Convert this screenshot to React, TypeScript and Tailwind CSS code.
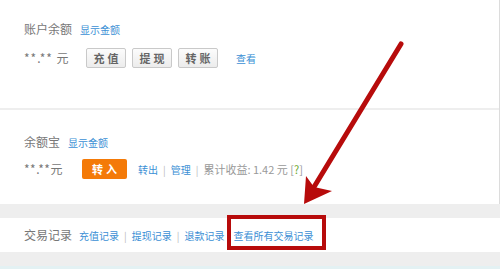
import React from "react";

const font = { fontFamily: '"Noto Sans CJK SC", "Noto Sans", sans-serif' };

function GrayBtn({ children }: { children: React.ReactNode }) {
  return (
    <div className="flex h-[20px] w-[40px] items-center justify-center rounded-[2px] border border-[#c9c9c9] bg-gradient-to-b from-[#fcfcfc] to-[#ececec] pl-[3px] text-[11px] font-bold tracking-[3px] text-[#666]">
      {children}
    </div>
  );
}

function Sep() {
  return <span className="mx-[5px] text-[10px] text-[#bbb]">|</span>;
}

export default function App() {
  return (
    <div className="relative h-[269px] w-[500px] overflow-hidden bg-white" style={font}>
      {/* top card */}
      <div className="h-[204px] border-r border-[#dcdcdc] bg-white">
        <div className="h-[108px] pl-[24px] pt-[21px]">
          <div className="flex h-[16px] items-center">
            <span className="text-[12px] text-[#777]">账户余额</span>
            <span className="ml-[8px] text-[10px] text-[#3b8fd5]">显示金额</span>
          </div>
          <div className="mt-[11px] flex h-[20px] items-center">
            <span className="w-[62px] text-[12px] tracking-[1px] text-[#777]">**.** 元</span>
            <div className="flex gap-[6px]">
              <GrayBtn>充值</GrayBtn>
              <GrayBtn>提现</GrayBtn>
              <GrayBtn>转账</GrayBtn>
            </div>
            <span className="ml-[18px] text-[10px] text-[#3b8fd5]">查看</span>
          </div>
        </div>
        <div className="h-[2px] bg-[#eeeeee]" />
        <div className="pl-[24px] pt-[24px]">
          <div className="flex h-[16px] items-center">
            <span className="text-[12px] text-[#777]">余额宝</span>
            <span className="ml-[8px] text-[10px] text-[#3b8fd5]">显示金额</span>
          </div>
          <div className="mt-[9px] flex h-[20px] items-center">
            <span className="w-[58px] text-[12px] tracking-[0.5px] text-[#777]">**.**元</span>
            <div className="flex h-[20px] w-[45px] items-center justify-center rounded-[2px] bg-[#f47a08] pl-[3px] text-[11px] font-bold tracking-[3px] text-white">
              转入
            </div>
            <span className="ml-[11px] text-[10px] text-[#3b8fd5]">转出</span>
            <Sep />
            <span className="text-[10px] text-[#3b8fd5]">管理</span>
            <Sep />
            <span className="text-[11px] text-[#999]">
              累计收益: 1.42 元 [<span className="text-[#6aa82a]">?</span>]
            </span>
          </div>
        </div>
      </div>
      <div className="h-[14px] bg-[#eeeeee]" />
      <div className="flex h-[34px] items-center bg-white pl-[24px]">
        <span className="text-[12px] text-[#777]">交易记录</span>
        <span className="ml-[7px] text-[10px] text-[#3b8fd5]">充值记录</span>
        <Sep />
        <span className="text-[10px] text-[#3b8fd5]">提现记录</span>
        <Sep />
        <span className="text-[10px] text-[#3b8fd5]">退款记录</span>
        <span className="ml-[9px] text-[10px] text-[#3b8fd5]">查看所有交易记录</span>
      </div>
      <div className="h-[14px] bg-[#eeeeee]" />
      <div className="h-[3px] bg-[#e3f1f3]" />

      {/* red highlight box */}
      <div className="pointer-events-none absolute left-[227px] top-[215px] h-[35px] w-[99px] border-[4px] border-[#b70b0b]" />
      {/* arrow */}
      <svg className="pointer-events-none absolute left-0 top-0" width="500" height="269" viewBox="0 0 500 269">
        <line x1="401" y1="44" x2="314" y2="187" stroke="#b70b0b" strokeWidth="5" strokeLinecap="round" />
        <polygon points="304,204 306,176 314,187 332,191" fill="#b70b0b" />
      </svg>
    </div>
  );
}
